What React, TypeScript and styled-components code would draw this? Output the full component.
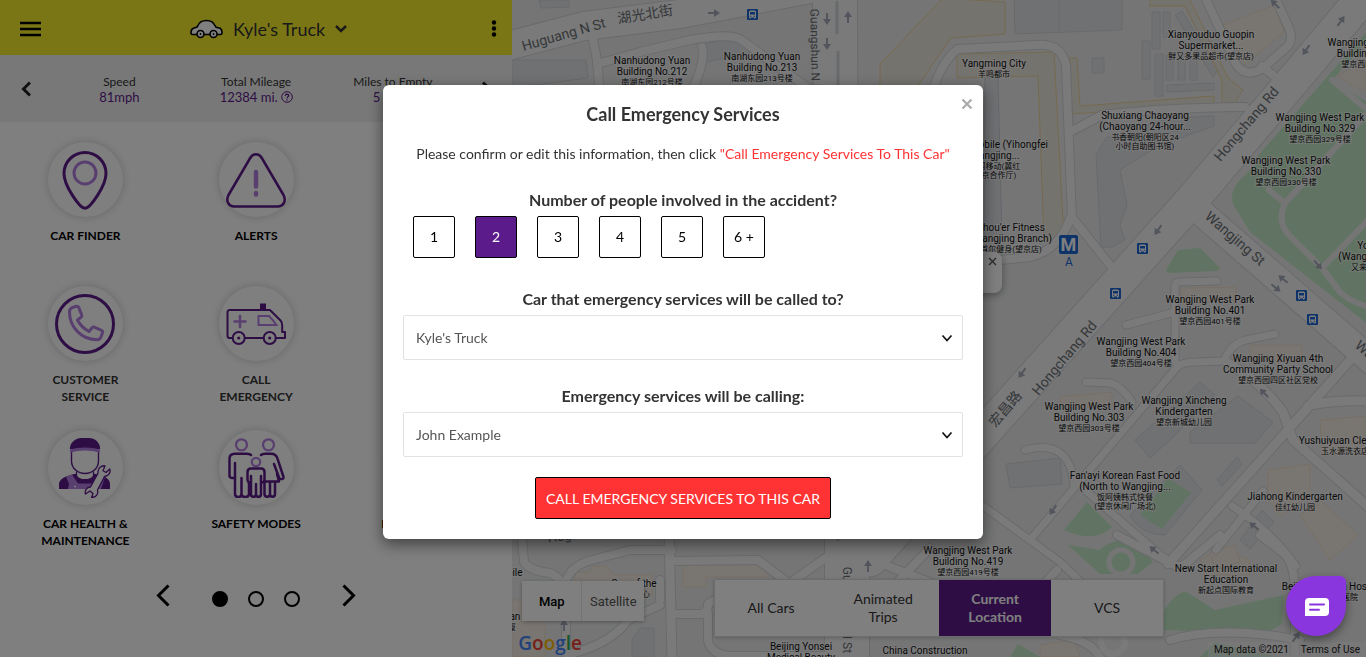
import React, { useState } from "react";
import styled, { createGlobalStyle, css } from "styled-components";

const PURPLE = "#5c1b8b";
const LILAC = "#b37fe0";

const GlobalStyle = createGlobalStyle`
  *, *::before, *::after { box-sizing: border-box; }
  body { margin: 0; background: #fff; font-family: Lato, "Liberation Sans", sans-serif; color: #333; }
  button, select { font: inherit; color: inherit; }
  button { background: none; border: 0; padding: 0; cursor: pointer; }
  h1, h2, p, dl, dd, ul { margin: 0; padding: 0; }
  svg { display: block; }
`;

const Page = styled.div`
  display: flex;
  min-height: 100vh;
`;

/* ---------- Left panel ---------- */

const Panel = styled.aside`
  flex: 0 0 37.5%;
  display: flex;
  flex-direction: column;
  background: #fff;
`;

const Header = styled.header`
  display: flex;
  align-items: center;
  justify-content: space-between;
  height: 55px;
  padding: 2px 15px 0 20px;
  background: #f7ed2a;
`;

const CarPicker = styled.button`
  display: flex;
  align-items: center;
  gap: 10px;
  padding-left: 5px;
  font-size: 18px;
  line-height: 22px;
`;

const Stats = styled.section`
  display: flex;
  align-items: center;
  height: 67px;
  background: #f1f1f1;
`;

const StatArrow = styled.button`
  flex: 0 0 51px;
  display: flex;
  justify-content: center;
`;

const StatList = styled.dl`
  flex: 1;
  display: grid;
  grid-template-columns: repeat(3, 1fr);
  padding-top: 2px;
  text-align: center;
`;

const StatName = styled.dt`
  font-size: 12px;
  line-height: 15px;
`;

const StatValue = styled.dd`
  display: flex;
  align-items: center;
  justify-content: center;
  gap: 3px;
  font-size: 13px;
  line-height: 16px;
  color: ${PURPLE};
`;

const Tiles = styled.ul`
  display: grid;
  grid-template-columns: repeat(3, 1fr);
  grid-auto-rows: 144px;
  padding-top: 20px;
  list-style: none;
`;

const Tile = styled.li<{ $column: number }>`
  grid-column: ${(p) => p.$column};
  display: flex;
  justify-content: center;
`;

const TileButton = styled.button<{ $soft?: boolean }>`
  display: flex;
  flex-direction: column;
  align-items: center;
  gap: 10px;
  width: 96px;
  font-size: 12px;
  font-weight: 700;
  line-height: 17px;
  color: ${(p) => (p.$soft ? "#333" : "#000")};
`;

const TileIcon = styled.span`
  display: grid;
  place-items: center;
  width: 75px;
  height: 75px;
  border-radius: 50%;
  background: #fff;
  box-shadow: 0 0 10px rgba(0, 0, 0, 0.2);
`;

const Pager = styled.nav`
  display: flex;
  align-items: flex-end;
  justify-content: center;
  gap: 42px;
  padding: 10px 0 40px;
`;

const Dots = styled.div`
  display: flex;
  gap: 20px;
`;

const Dot = styled.button<{ $on?: boolean }>`
  width: 16px;
  height: 16px;
  border: 2px solid #000;
  border-radius: 50%;
  background: ${(p) => (p.$on ? "#000" : "transparent")};
`;

/* ---------- Map ---------- */

const MapPane = styled.main`
  position: relative;
  flex: 1;
  display: flex;
  flex-direction: column;
  justify-content: flex-end;
  overflow: hidden;
  background: #eaebec;
`;

const MapDrawing = styled.svg`
  position: absolute;
  inset: 0;
  width: 100%;
  height: 100%;
  font-family: Roboto, "Noto Sans CJK SC", sans-serif;
`;

const MapBar = styled.div`
  position: relative;
  display: flex;
  justify-content: center;
  padding-bottom: 20px;
`;

const MapTypes = styled.div`
  position: absolute;
  left: 10px;
  bottom: 36px;
  display: flex;
  background: #fff;
  box-shadow: 0 1px 4px rgba(0, 0, 0, 0.3);
`;

const MapType = styled.button<{ $on?: boolean }>`
  height: 40px;
  width: ${(p) => (p.$on ? 60 : 62)}px;
  font-family: Roboto, sans-serif;
  font-size: 13px;
  font-weight: ${(p) => (p.$on ? 500 : 400)};
  color: ${(p) => (p.$on ? "#000" : "#565656")};
  border-right: ${(p) => (p.$on ? "1px solid #e6e6e6" : "0")};
`;

const Views = styled.div`
  display: grid;
  grid-template-columns: repeat(4, 112px);
  border: 1px solid #d8d8d8;
  background: #fff;
  box-shadow: 0 1px 4px rgba(0, 0, 0, 0.2);
`;

const View = styled.button<{ $on?: boolean }>`
  height: 56px;
  padding: 0 20px;
  font-size: 14px;
  line-height: 18px;
  ${(p) =>
    p.$on &&
    css`
      background: ${PURPLE};
      color: #fff;
      font-weight: 700;
    `}
`;

const Logo = styled.a`
  position: absolute;
  left: 6px;
  bottom: 2px;
  font-family: "Open Sans", sans-serif;
  font-size: 19px;
  font-weight: 600;
  line-height: 24px;
  text-decoration: none;
`;

const LogoLetter = styled.span<{ $color: string }>`
  color: ${(p) => p.$color};
`;

const Credits = styled.div`
  position: absolute;
  right: 0;
  bottom: 0;
  display: flex;
  gap: 12px;
  padding: 0 6px;
  background: rgba(245, 245, 245, 0.5);
  font-family: Roboto, sans-serif;
  font-size: 10px;
  line-height: 15px;
  color: #222;
`;

const PlainLink = styled.a`
  color: inherit;
  text-decoration: none;
`;

const InfoWindow = styled.div`
  position: absolute;
  left: 370px;
  top: 252px;
  width: 120px;
  height: 41px;
  display: flex;
  align-items: flex-start;
  justify-content: flex-end;
  padding: 5px 5px 0 0;
  border-radius: 8px;
  background: #fff;
  box-shadow: 0 2px 7px 1px rgba(0, 0, 0, 0.3);
`;

/* ---------- Dialog ---------- */

const Backdrop = styled.div`
  position: fixed;
  inset: 0;
  display: flex;
  justify-content: center;
  align-items: flex-start;
  padding-top: 85px;
  background: rgba(0, 0, 0, 0.5);
`;

const Dialog = styled.form`
  position: relative;
  display: flex;
  flex-direction: column;
  width: 600px;
  max-width: 100%;
  padding: 20px;
  border-radius: 6px;
  background: #fff;
  box-shadow: 0 5px 15px rgba(0, 0, 0, 0.5);
`;

const Title = styled.h2`
  margin-bottom: 20px;
  font-size: 18px;
  font-weight: 700;
  line-height: 18px;
  text-align: center;
`;

const Close = styled.button`
  position: absolute;
  right: 10px;
  top: 13px;
`;

const Intro = styled.p`
  margin-bottom: 20px;
  font-size: 14px;
  line-height: 21px;
  text-align: center;
`;

const Alarm = styled.span`
  color: #f33;
`;

const Group = styled.fieldset`
  margin: 0;
  padding: 0;
  border: 0;
`;

const fieldName = css`
  font-size: 16px;
  font-weight: 700;
  line-height: 32px;
  text-align: center;
`;

const Legend = styled.legend`
  ${fieldName}
  width: 100%;
  padding: 0;
`;

const Label = styled.label`
  ${fieldName}
`;

const Counts = styled.div`
  display: flex;
  gap: 20px;
  padding: 0 10px 25px;
`;

const Count = styled.button<{ $on?: boolean }>`
  width: 42px;
  height: 42px;
  padding-bottom: 2px;
  border: 1px solid #000;
  border-radius: 2px;
  background: ${(p) => (p.$on ? PURPLE : "#fff")};
  color: ${(p) => (p.$on ? "#fff" : "#000")};
  font-size: 14px;
`;

const SelectBox = styled.div`
  display: grid;
  align-items: center;
  margin-bottom: 20px;

  > * { grid-area: 1 / 1; }
  > svg { justify-self: end; margin-right: 10px; pointer-events: none; }
`;

const Select = styled.select`
  appearance: none;
  width: 100%;
  height: 45px;
  padding: 0 30px 0 12px;
  border: 1px solid #e2e2e2;
  border-radius: 2px;
  background: #fff;
  color: #555;
  font-size: 14px;
`;

const Submit = styled.button`
  align-self: center;
  height: 42px;
  padding: 0 10px;
  border: 1px solid #000;
  border-radius: 2px;
  background: #f33;
  color: #fff;
  font-size: 14px;
`;

const Chat = styled.button`
  position: fixed;
  right: 20px;
  bottom: 21px;
  display: grid;
  place-items: center;
  width: 60px;
  height: 60px;
  padding: 2px 0 0 2px;
  border-radius: 30px 6px 30px 30px;
  background: #8a36de;
  box-shadow: 0 4px 10px rgba(0, 0, 0, 0.4);
`;

/* ---------- Icons ---------- */

const Chevron = ({ w, h, d, s, color = "#000" }: { w: number; h: number; d: string; s: number; color?: string }) => (
  <svg width={w} height={h} viewBox={`0 0 ${w} ${h}`} fill="none" stroke={color} strokeWidth={s} aria-hidden="true">
    <path d={d} />
  </svg>
);

const CarIcon = () => (
  <svg width="33" height="20" viewBox="0 0 33 20" fill="#fff" stroke="#000" strokeWidth="1.6" aria-hidden="true">
    <path d="M1 13.500c0-3 .8-4 3-4.600l3-.8C9.500 3 11.500 1.500 16.500 1.500S23 3 26 8.200l3.500.8c1.800.6 2.500 2 2.500 5 0 1-.6 1.500-1.600 1.500H2.200C1.300 15.500 1 14.700 1 13.500z" />
    <circle cx="10.500" cy="15" r="3.500" />
    <circle cx="23.500" cy="15" r="3.500" />
    <circle cx="10.500" cy="15" r=".9" fill="#000" stroke="none" />
    <circle cx="23.500" cy="15" r=".9" fill="#000" stroke="none" />
  </svg>
);

const HelpIcon = () => (
  <svg width="12" height="12" viewBox="0 0 12 12" fill="none" stroke={PURPLE} aria-hidden="true">
    <circle cx="6" cy="6" r="5.300" />
    <path d="M4.300 4.700C4.300 2.700 7.800 2.800 7.700 4.700 7.600 5.700 6 5.700 6 7.200M6 8.200v1.300" strokeWidth="1.300" />
  </svg>
);

const TileArt = ({ children }: { children: React.ReactNode }) => (
  <svg width="60" height="60" viewBox="0 0 60 60" fill="none" stroke={PURPLE} strokeLinecap="round" strokeLinejoin="round" aria-hidden="true">
    {children}
  </svg>
);

const PinArt = () => (
  <TileArt>
    <path d="M30 58.300C25 58.300 9 36 9 23.500a21 21 0 0 1 42 0C51 36 35 58.300 30 58.300z" strokeWidth="3" />
    <circle cx="30" cy="23" r="11" stroke={LILAC} strokeWidth="3" />
  </TileArt>
);

const AlertArt = () => (
  <TileArt>
    <path d="M24.500 7.500c2.500-4.300 8.500-4.300 11 0L57.500 45c3 5.500 0 11.500-6 11.500h-43c-6 0-9-6-6-11.500z" strokeWidth="2.500" />
    <path d="M30 22v14.500M30 43v1.500" stroke={LILAC} strokeWidth="4.500" />
  </TileArt>
);

const PhoneArt = () => (
  <TileArt>
    <circle cx="30" cy="30" r="28.500" strokeWidth="3" />
    <path
      d="M17.500 13.500l4-1.300c1-.2 1.800.3 2.200 1.200l3 7.500c.3 1 0 1.800-.7 2.400L22.500 26c2.500 5 6 8.500 11.500 11.500l3-3.800c.6-.7 1.400-.9 2.300-.6l7.200 3.200c.9.4 1.300 1.200 1.100 2.200l-1.500 4c-.5 2-2 3.300-4 3.300C26 45.500 14.500 33 14.500 18c0-2.500 1-3.800 3-4.500z"
      stroke={LILAC}
      strokeWidth="3"
    />
  </TileArt>
);

const AmbulanceArt = () => (
  <TileArt>
    <path d="M6.500 44H3.500a2 2 0 0 1-2-2V18a2 2 0 0 1 2-2H44l10.500 10.500c1.400 1.500 1.700 3 1.700 5V38H59v6H50M37.500 44H19" strokeWidth="2" />
    <rect x="34" y="9.500" width="6" height="6" fill={PURPLE} stroke="none" />
    <circle cx="12.700" cy="44" r="6" strokeWidth="2" />
    <circle cx="43.700" cy="44" r="6" strokeWidth="2" />
    <circle cx="12.700" cy="44" r="1.600" fill={PURPLE} stroke="none" />
    <circle cx="43.700" cy="44" r="1.600" fill={PURPLE} stroke="none" />
    <path d="M14 22v11M8.500 27.500h11" stroke={LILAC} strokeWidth="2.500" />
    <path d="M32.500 22h10.500c3 3 5.500 6 7.500 9h-18z" stroke={LILAC} strokeWidth="2" strokeLinejoin="miter" />
  </TileArt>
);

const MechanicArt = () => (
  <TileArt>
    <path d="M4 51v-5c0-3 3-6 7-7.500l8-2.500h22l8 2.500c4 1.500 6 4.500 6 7.500v5z" fill={PURPLE} stroke="none" />
    <path d="M11 38.500l6-2 6 9h15l6-9 6 2-4 12.500H13l1-5z" fill={LILAC} stroke="none" />
    <path d="M21.500 34v4c3 5 14 5 17 0v-4" fill="#fff" strokeWidth="1.300" />
    <path d="M16.500 14v9c0 7.500 6.500 12.500 13.500 12.500S43.500 30.500 43.500 23v-9" fill="#fff" strokeWidth="1.400" />
    <path d="M14.800 11C15 4 21 0 26 0h8c6 0 11 4.500 11.200 11z" fill={PURPLE} stroke="none" />
    <path d="M15 13q15-4 30 0" stroke={LILAC} strokeWidth="3" strokeLinecap="butt" />
    <circle cx="20" cy="48.500" r="1" fill="#fff" stroke="none" />
    <path
      d="M50 27.800c-4-.5-7.500 2.500-7 7.300L35.500 49c-4 .3-6 3.500-5 7l4.500-3 3 2.500-1.500 4c4.500 0 7-3 6-7.500L49.500 38.500c4-.3 6.500-4 5.200-7.500L51 34.500l-3-1.800z"
      fill="#fff"
      strokeWidth="1.300"
    />
  </TileArt>
);

const FamilyArt = () => (
  <TileArt>
    <g stroke={LILAC} strokeWidth="2.300">
      <circle cx="15.500" cy="6.800" r="5.500" />
      <circle cx="42.500" cy="6.800" r="5.500" />
      <circle cx="30" cy="24" r="4.200" />
    </g>
    <g strokeWidth="2.500">
      <path d="M25 17c-1-1-2-1.300-4-1.300H9c-3.500 0-5.500 2-5.500 5V38c0 2 4.500 3 5.500 1V25M9 39v17c0 4 6.500 4 6.500 0V40M15.500 56c0 4 7.500 4 7.500 0V45" />
      <path d="M35 17c1-1 2-1.300 4-1.300h6c4 0 5.500 1.500 6.500 5L57.500 39c.5 2.500-3.500 3-4.500.5L48 26M51 36l2 7.500H39M38.500 43v13c0 3.500 5.500 3.500 5.500 0V44M44 56c0 3.500 5 3.500 5 0V44" />
      <path d="M25 44c-2.500 1-3.500-.5-3.500-3v-7c0-2.500 1-3.500 3.500-3.500h10c2.500 0 3.500 1 3.500 3.500v7c0 2.500-1 4-3.500 3M25 38v18c0 3.800 5 3.800 5 0V46M30 56c0 3.800 5 3.800 5 0V38" />
    </g>
  </TileArt>
);

/* ---------- Map drawing ---------- */

type Road = [d: string, width: number];

const roads: Road[] = [
  ["M592 34L597 60L602 120M597 64L640 52L690 40Q728 33 740 39L808 88M702 47Q706 62 692 90", 8],
  ["M930 100Q940 62 958 49L1035 45Q1062 42 1066 66L1072 218M1070 132L1102 115Q1160 108 1245 107M1071 216Q1060 250 1030 257L980 262M1071 216L1110 265", 8],
  ["M1204 -5L1236 64Q1245 78 1262 69L1288 46Q1294 38 1288 26L1274 -5M1262 66L1276 78", 8],
  ["M1030 540L1178 366Q1184 362 1195 362L1224 361Q1230 344 1246 340L1275 334M1175 362V286Q1175 282 1179 282L1217 281M1126 325L1175 312", 7],
  ["M1352 358L1286 432L1168 564M1228 363Q1262 383 1283 412L1293 440L1372 510M1308 406Q1330 400 1372 401", 9],
  ["M1086 382L1110 383Q1122 386 1132 402M1025 450Q1070 438 1074 485M975 500L1060 562L1110 610M1085 490L1160 555L1180 568M1263 491L1216 550M1232 506Q1270 530 1296 566", 7],
  ["M1117 535L1172 564Q1180 570 1190 560L1220 535M1260 535L1282 552Q1294 560 1295 590V660M1057 570L1020 610M1100 657Q1090 640 1060 635M1170 640Q1220 625 1300 640", 8],
  ["M522 540L524 562Q530 571 550 573Q566 580 566 600V660M566 582Q570 566 592 560L630 550H672M672 561L758 560L800 592M790 583L838 549M672 614H700Q708 614 708 604Q716 598 730 597M708 614V640Q710 654 730 656H830M566 655Q610 645 628 620L660 605M660 580V600", 8],
  ["M669 530L672 660", 9],
  ["M880 540L872 560L950 590M930 548L890 590", 8],
];

const majorRoads: Road[] = [
  ["M500 48L584 26L680 14L826 -14", 28],
  ["M835 -10L836 300L847 540V670", 44],
  ["M1366 -6L1192 200L870 560", 33],
  ["M1196 208L1384 372", 26],
];

const parks = [
  "M1370 104L1332 80L1270 150L1240 180Q1228 192 1234 206L1250 232L1370 326z",
  "M1370 28L1256 158L1261 160L1370 38z",
  "M1166 270L1178 250L1200 248L1220 268L1218 271L1168 273z",
  "M1087 502L1112 527Q1095 544 1064 530z",
  "M1068 545L1100 550Q1110 538 1135 541L1153 562L1138 574L1100 574z",
  "M1168 478L1191 493L1162 529L1140 515z",
  "M1163 612Q1180 586 1190 594L1215 610L1284 595L1282 624Q1250 645 1215 632L1163 630z",
  "M1010 657L1018 644L1040 657z",
  "M1200 657L1215 642L1280 657z",
];

const parkPaths = "M1269 190L1285 203L1370 110M1285 203Q1276 222 1290 236L1322 268L1340 292Q1350 302 1372 308M1322 268L1372 216M1332 80L1370 112";

const greyBlocks = [
  "M512 60L586 60L588 78L512 88z",
  "M539 0H569V7L541 8z",
  "M700 45L735 38L752 52L706 62z",
  "M1014 -4H1122V30L1015 34z",
  "M1059 -4V32",
  "M1152 12H1160V49H1152zM1163 12H1170V37H1163zM1142 41H1150V79H1142zM1155 54H1163V96H1155zM1166 55H1173V80H1166zM1178 55H1185V80H1178zM1190 55H1197V80H1190zM1167 85L1214 83V90L1167 92z",
  "M1175 15L1182 11L1218 70L1213 77z",
  "M1092 58H1104V73H1092z",
  "M1106 138L1170 118L1214 116V126L1160 145L1120 170L1127 205L1120 225L1125 240L1112 247H1101L1096 155z",
  "M1310 110L1322 92L1336 104L1320 124z",
  "M1135 440L1200 382L1215 395L1170 440L1150 458z",
  "M1190 432L1238 396L1273 422L1255 443H1190z",
  "M1006 464L1060 458L1062 484L1010 488z",
  "M1217 480L1237 457L1242 464L1222 486z",
  "M1130 515L1180 465L1202 490L1165 535Q1140 535 1130 515z",
  "M1240 540L1262 510L1274 522L1250 549z",
  "M632 640L640 628H654V657H632z",
];

const beigeBlocks = [
  "M1223 25L1275 5L1284 32L1245 65z",
  "M1337 75L1366 62V92L1350 84z",
  "M1285 148L1300 140L1300 160L1283 165z",
  "M1180 288L1236 287V300L1182 304z",
  "M1250 345H1302V362H1250z",
  "M1060 397L1112 392V406L1060 408z",
  "M1320 420L1366 416V452L1322 456z",
  "M1268 470L1310 464V496L1280 516L1268 500z",
  "M1300 515L1320 500L1358 535L1330 560z",
  "M1200 560L1220 548L1250 560V575H1205z",
  "M1210 552L1235 545L1240 562L1215 570z",
  "M575 572H590L592 566H606L614 575H652V596H600L575 590z",
  "M683 562H758L770 577H706V587H683z",
  "M512 600H545V657H512z",
  "M1040 645L1075 640L1080 657H1040z",
  "M1341 270L1366 255V290L1350 300z",
];

const yellowBlocks = [
  "M880 100V64L943 -2L1005 2V34L951 38L915 90z",
  "M957 54L1054 52L1064 240H1044L1038 76L957 78z",
  "M1070 58H1077L1080 106L1214 96V104L1072 114z",
  "M1150 -4H1188L1228 78L1243 90L1235 103H1222V80L1185 6H1150z",
];

interface Place {
  x: number;
  y: number;
  lines: string[];
  local: string[];
}

const places: Place[] = [
  { x: 652, y: 64, lines: ["Nanhudong Yuan", "Building No.212"], local: ["南湖东园212号楼"] },
  { x: 762, y: 60, lines: ["Nanhudong Yuan", "Building No.213"], local: ["南湖东园213号楼"] },
  { x: 994, y: 67, lines: ["Yangming City"], local: ["羊鸣都市"] },
  { x: 1211, y: 38, lines: ["Xianyouduo Guopin", "Supermarket..."], local: ["鲜又多果品超市(望京店)"] },
  { x: 1145, y: 119, lines: ["Shuxiang Chaoyang", "(Chaoyang 24-hour..."], local: ["书香朝阳(朝阳区24", "小时自助图书馆)"] },
  { x: 1372, y: 46, lines: ["Wangjing West Park", "Building No.328"], local: ["望京西园328号楼"] },
  { x: 1320, y: 121, lines: ["Wangjing West Park", "Building No.329"], local: ["望京西园329号楼"] },
  { x: 1286, y: 164, lines: ["Wangjing West Park", "Building No.330"], local: ["望京西园330号楼"] },
  { x: 995, y: 148, lines: ["China Mobile (Yihongfei", "Wangjing..."], local: ["中国移动(冀红", "望京合作厅)"] },
  { x: 1011, y: 231, lines: ["Shou'er Fitness", "(Wangjing Branch)"], local: ["首尔健身(望京店)"] },
  { x: 1210, y: 303, lines: ["Wangjing West Park", "Building No.401"], local: ["望京西园401号楼"] },
  { x: 1141, y: 345, lines: ["Wangjing West Park", "Building No.404"], local: ["望京西园404号楼"] },
  { x: 1278, y: 362, lines: ["Wangjing Xiyuan 4th", "Community Party School"], local: ["望京西园四区社区党校"] },
  { x: 1089, y: 410, lines: ["Wangjing West Park", "Building No.303"], local: ["望京西园303号楼"] },
  { x: 1184, y: 404, lines: ["Wangjing Xincheng", "Kindergarten"], local: ["望京新城幼儿园"] },
  { x: 1125, y: 479, lines: ["Fan'ayi Korean Fast Food", "(North to Wangjing..."], local: ["饭阿姨韩式快餐", "(望京休闲广场北)"] },
  { x: 1295, y: 500, lines: ["Jiahong Kindergarten"], local: ["佳红幼儿园"] },
  { x: 1345, y: 444, lines: ["Yushuiyuan Cleaners"], local: ["玉水源洗衣店"] },
  { x: 1375, y: 249, lines: ["Yoshida", "(Wangjing Shop)"], local: ["又来顺饭馆店"] },
  { x: 968, y: 554, lines: ["Wangjing West Park", "Building No.419"], local: ["望京西园419号楼"] },
  { x: 1226, y: 572, lines: ["New Start International", "Education"], local: ["新起点国际教育"] },
  { x: 1334, y: 590, lines: ["Beijing Sixiang Hospital"], local: ["北京思祥医院"] },
  { x: 801, y: 650, lines: ["Beijing Yonsei", "Medical Beauty"], local: [] },
  { x: 925, y: 654, lines: ["China Construction"], local: [] },
  { x: 497, y: 576, lines: ["Automobile"], local: [] },
  { x: 508, y: 620, lines: ["Yulan"], local: ["大厦"] },
  { x: 634, y: 587, lines: ["Spa of the"], local: ["美容中心"] },
];

const streets = [
  { x: 565, y: 39, r: -16, text: "Huguang N St", size: 14 },
  { x: 646, y: 19, r: -9, text: "湖光北街", size: 14 },
  { x: 811, y: 52, r: 89, text: "Guangshun N St", size: 12 },
  { x: 1250, y: 127, r: -50, text: "Hongchang Rd", size: 14 },
  { x: 1068, y: 361, r: -50, text: "Hongchang Rd", size: 14 },
  { x: 1009, y: 412, r: -50, text: "宏昌路", size: 14 },
  { x: 1232, y: 242, r: 41, text: "Wangjing St", size: 14 },
  { x: 1382, y: 371, r: 41, text: "Wangjing St", size: 14 },
  { x: 843, y: 610, r: 90, text: "Guangshun N St", size: 12 },
  { x: 588, y: 537, r: -8, text: "Huguang N St", size: 13 },
];

const arrows = [
  [714, 13, 90], [827, 19, 180], [827, 44, 180], [848, 17, 0], [1275, 4, -45], [1341, 21, 35], [1306, 50, 215],
  [1158, 230, 215], [1022, 373, 215], [1318, 265, 140], [1283, 279, -50], [1276, 288, 130], [1264, 393, -45],
  [1053, 510, 215], [1154, 550, -50], [1254, 526, -50], [868, 566, 0], [564, 625, 0], [1296, 637, 35],
];

const busStops = [[752, 14], [1142, 248], [1115, 293], [1301, 295], [1312, 319]];

const CityMap = () => (
  <MapDrawing viewBox="512 0 854 657" preserveAspectRatio="xMinYMin slice" role="img" aria-label="Street map">
    <g fill="#e1e3e5" stroke="#d2d4d8">{greyBlocks.map((d) => <path key={d} d={d} />)}</g>
    <g fill="#f3eae0" stroke="#efdfcb">{beigeBlocks.map((d) => <path key={d} d={d} />)}</g>
    <g fill="#eae6dc" stroke="#ecd49c">{yellowBlocks.map((d) => <path key={d} d={d} />)}</g>
    <path d="M985 78H998L1002 240H984z" fill="#dde0e5" stroke="#c9cdd4" />
    <g fill="#c3e9c6">{parks.map((d) => <path key={d} d={d} />)}</g>
    <g fill="none" strokeLinecap="round" strokeLinejoin="round">
      {[...roads, ...majorRoads].map(([d, w]) => <path key={d} d={d} stroke="#d2d4d7" strokeWidth={w + 2} />)}
      {[...roads, ...majorRoads].map(([d, w]) => <path key={d} d={d} stroke="#f5f5f6" strokeWidth={w} />)}
      <path d={parkPaths} stroke="#eaebec" strokeWidth="6" />
      <circle cx="1121" cy="562" r="12" stroke="#eaebec" strokeWidth="5" />
      <circle cx="1113" cy="642" r="12" stroke="#f5f5f6" strokeWidth="6" />
      <path d="M837 2V33M838 52V540" stroke="#d2d4d7" strokeWidth="3" />
    </g>
    <g fill="none" stroke="#a6abba" strokeWidth="2">
      {arrows.map(([x, y, r]) => (
        <g key={`${x}-${y}`} transform={`translate(${x} ${y}) rotate(${r})`}>
          <path d="M0 6V-1" />
          <path d="M-4 0L0-6L4 0z" fill="#a6abba" stroke="none" />
        </g>
      ))}
    </g>
    {streets.map((s) => (
      <text key={`${s.x}-${s.y}`} transform={`translate(${s.x} ${s.y}) rotate(${s.r})`} textAnchor="middle" fontSize={s.size} fill="#6b7075">
        {s.text}
      </text>
    ))}
    {busStops.map(([x, y]) => (
      <g key={`${x}-${y}`} transform={`translate(${x + 0.5} ${y + 0.5})`}>
        <rect x="-5.500" y="-5.500" width="11" height="11" rx="1" fill="#1a66d2" />
        <path d="M-3.500-2.500Q-3.500-4-2-4H2Q3.500-4 3.500-2.500V3H3V4H1.500V3H-1.500V4H-3V3H-3.500z" fill="#fff" />
        <path d="M-2.500-2.500H2.500V0H-2.500zM-2.500 1.200H-1.200V2.200H-2.500zM1.200 1.200H2.500V2.200H1.200z" fill="#1a66d2" />
      </g>
    ))}
    <rect x="1059" y="235" width="19" height="19" rx="2" fill="#1a66d2" />
    <g textAnchor="middle">
      <text x="1068.500" y="251" fontSize="18" fontWeight="700" fill="#fff">M</text>
      <text x="1069" y="266" fontSize="12" fill="#1a66d2">A</text>
      {places.map((p) => (
        <text key={`${p.x}-${p.y}`} fontSize="10" fill="#111" stroke="#fff" strokeOpacity=".6" strokeWidth="2" paintOrder="stroke">
          {p.lines.map((t, i) => (
            <tspan key={t} x={p.x} y={p.y + i * 11}>{t}</tspan>
          ))}
          {p.local.map((t, i) => (
            <tspan key={t} x={p.x} y={p.y + p.lines.length * 11 - 1 + i * 9} fontSize="8">{t}</tspan>
          ))}
        </text>
      ))}
    </g>
  </MapDrawing>
);

/* ---------- App ---------- */

const tiles = [
  { label: "CAR FINDER", art: <PinArt />, column: 1 },
  { label: "ALERTS", art: <AlertArt />, column: 2 },
  { label: "CUSTOMER SERVICE", art: <PhoneArt />, column: 1, soft: true },
  { label: "CALL EMERGENCY", art: <AmbulanceArt />, column: 2, soft: true },
  { label: "CAR HEALTH & MAINTENANCE", art: <MechanicArt />, column: 1 },
  { label: "SAFETY MODES", art: <FamilyArt />, column: 2 },
  { label: "DRIVER SCORES", art: null, column: 3 },
];

const logo: [string, string][] = [
  ["G", "#4285f4"], ["o", "#ea4335"], ["o", "#fbbc05"], ["g", "#4285f4"], ["l", "#34a853"], ["e", "#ea4335"],
];

const DropDown = ({ id, value }: { id: string; value: string }) => (
  <SelectBox>
    <Select id={id} defaultValue={value}>
      <option>{value}</option>
    </Select>
    <Chevron w={12} h={8} d="M1.500 1.500L6 6.500L10.500 1.500" s={1.7} color="#111" />
  </SelectBox>
);

export default function App() {
  const [people, setPeople] = useState("2");

  return (
    <>
      <GlobalStyle />
      <Page>
        <Panel>
          <Header>
            <button aria-label="Menu">
              <Chevron w={21} h={18} d="M0 3H21M0 9H21M0 15H21" s={2.5} />
            </button>
            <CarPicker>
              <CarIcon />
              Kyle's Truck
              <Chevron w={12} h={8} d="M1 1L6 6L11 1" s={2.5} color="#333" />
            </CarPicker>
            <button aria-label="More">
              <svg width="6" height="18" viewBox="0 0 6 18" aria-hidden="true">
                <circle cx="3" cy="2.500" r="2.200" />
                <circle cx="3" cy="8.500" r="2.200" />
                <circle cx="3" cy="14.500" r="2.200" />
              </svg>
            </button>
          </Header>
          <Stats>
            <StatArrow aria-label="Previous values">
              <Chevron w={10} h={16} d="M9 1.500L2.500 8L9 14.500" s={3} color="#222" />
            </StatArrow>
            <StatList>
              <div>
                <StatName>Speed</StatName>
                <StatValue>81mph</StatValue>
              </div>
              <div>
                <StatName>Total Mileage</StatName>
                <StatValue>12384 mi. <HelpIcon /></StatValue>
              </div>
              <div>
                <StatName>Miles to Empty</StatName>
                <StatValue>5 miles</StatValue>
              </div>
            </StatList>
            <StatArrow aria-label="Next values">
              <Chevron w={10} h={16} d="M1 1.500L7.500 8L1 14.500" s={3} color="#222" />
            </StatArrow>
          </Stats>
          <Tiles>
            {tiles.map((t) => (
              <Tile key={t.label} $column={t.column}>
                <TileButton $soft={t.soft}>
                  <TileIcon>{t.art}</TileIcon>
                  {t.label}
                </TileButton>
              </Tile>
            ))}
          </Tiles>
          <Pager aria-label="Pages">
            <button aria-label="Previous page">
              <Chevron w={14} h={23} d="M12.500 1.500L2.500 11.500L12.500 21.500" s={3} />
            </button>
            <Dots>
              <Dot $on aria-label="Page 1" />
              <Dot aria-label="Page 2" />
              <Dot aria-label="Page 3" />
            </Dots>
            <button aria-label="Next page">
              <Chevron w={14} h={23} d="M1.500 1.500L11.500 11.500L1.500 21.500" s={3} />
            </button>
          </Pager>
        </Panel>

        <MapPane>
          <CityMap />
          <InfoWindow>
            <button aria-label="Close info">
              <Chevron w={9} h={9} d="M1 1L8 8M8 1L1 8" s={1.3} color="#555" />
            </button>
          </InfoWindow>
          <MapBar>
            <MapTypes>
              <MapType $on>Map</MapType>
              <MapType>Satellite</MapType>
            </MapTypes>
            <Views>
              <View>All Cars</View>
              <View>Animated Trips</View>
              <View $on>Current Location</View>
              <View>VCS</View>
            </Views>
            <Logo href="#google">
              {logo.map(([ch, color], i) => (
                <LogoLetter key={i} $color={color}>{ch}</LogoLetter>
              ))}
            </Logo>
            <Credits>
              <span>Map data ©2021</span>
              <PlainLink href="#terms">Terms of Use</PlainLink>
            </Credits>
          </MapBar>
        </MapPane>
      </Page>

      <Backdrop>
        <Dialog role="dialog" aria-labelledby="dialog-title" onSubmit={(e) => e.preventDefault()}>
          <Title id="dialog-title">Call Emergency Services</Title>
          <Close type="button" aria-label="Close">
            <Chevron w={12} h={12} d="M1.500 1.500L10.500 10.500M10.500 1.500L1.500 10.500" s={2.2} color="#aaa" />
          </Close>
          <Intro>
            Please confirm or edit this information, then click <Alarm>"Call Emergency Services To This Car"</Alarm>
          </Intro>
          <Group>
            <Legend>Number of people involved in the accident?</Legend>
            <Counts>
              {["1", "2", "3", "4", "5", "6 +"].map((n) => (
                <Count key={n} type="button" $on={n === people} aria-pressed={n === people} onClick={() => setPeople(n)}>
                  {n}
                </Count>
              ))}
            </Counts>
          </Group>
          <Label htmlFor="car">Car that emergency services will be called to?</Label>
          <DropDown id="car" value="Kyle's Truck" />
          <Label htmlFor="caller">Emergency services will be calling:</Label>
          <DropDown id="caller" value="John Example" />
          <Submit type="submit">CALL EMERGENCY SERVICES TO THIS CAR</Submit>
        </Dialog>
      </Backdrop>

      <Chat aria-label="Open chat">
        <svg width="24" height="18" viewBox="0 0 24 18" aria-hidden="true">
          <path d="M4 0H20a4 4 0 0 1 4 4V14a4 4 0 0 1-4 4H0V4a4 4 0 0 1 4-4z" fill="#fff" />
          <path d="M5 6.500H19M5 11.800H14" stroke="#8a36de" strokeWidth="2" strokeLinecap="round" />
        </svg>
      </Chat>
    </>
  );
}
